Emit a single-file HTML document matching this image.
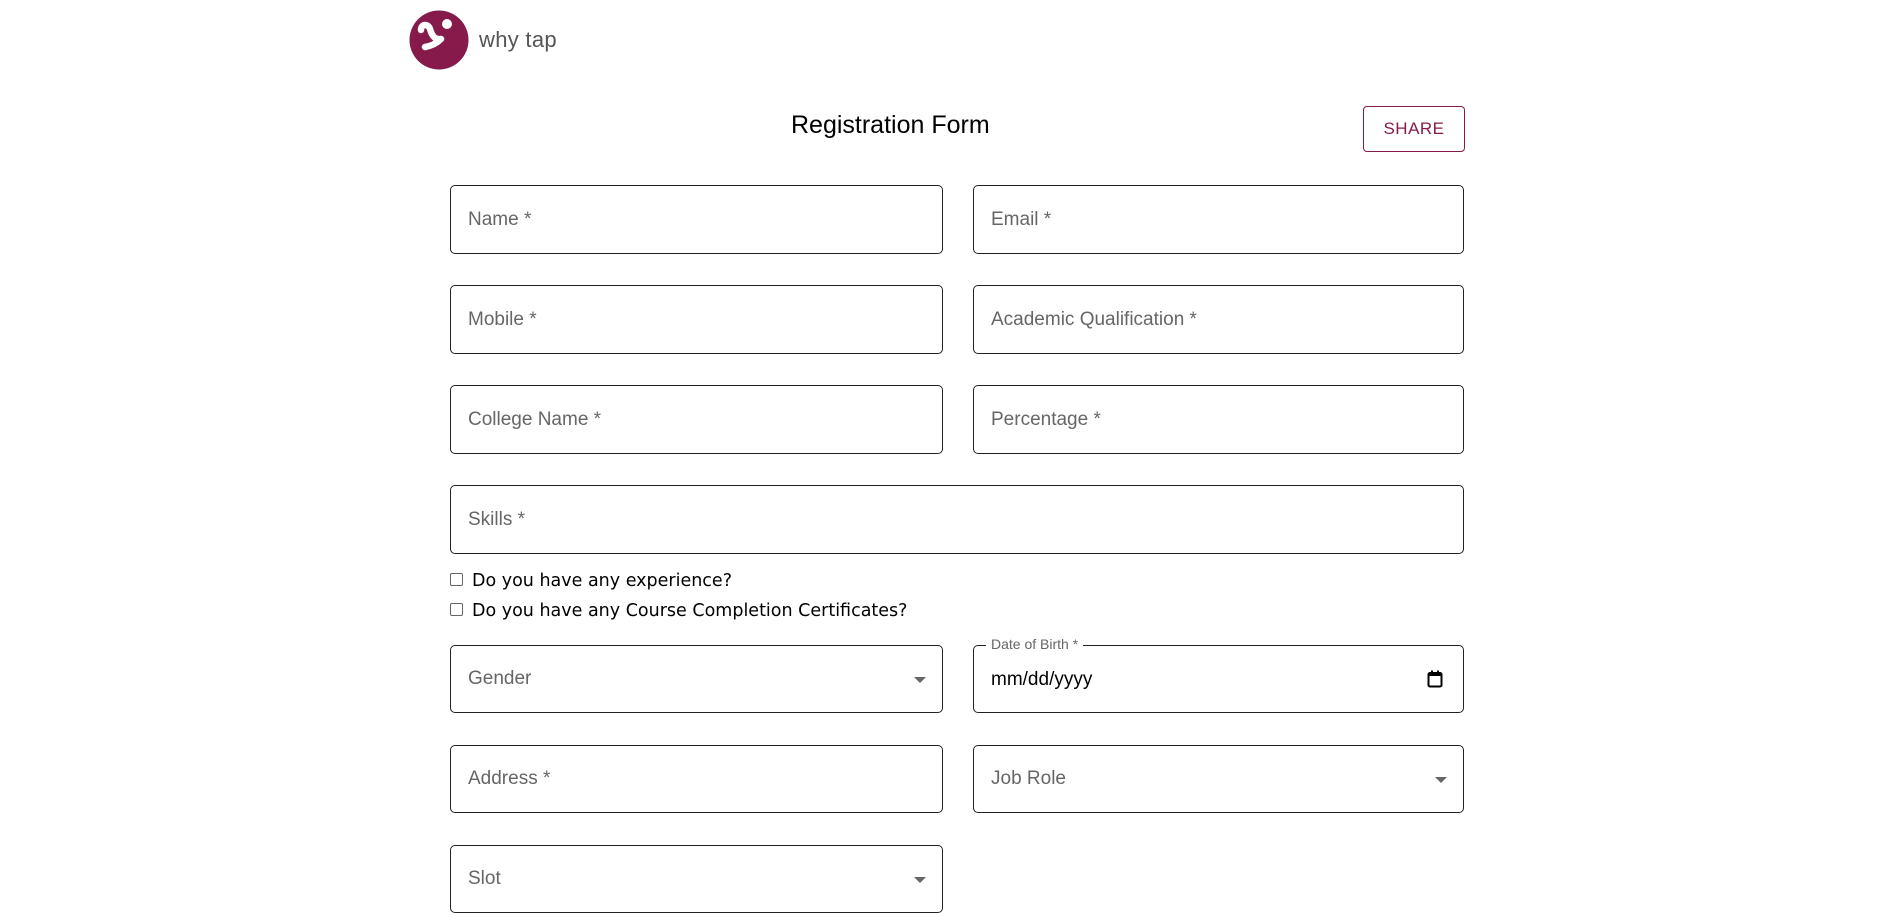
<!DOCTYPE html>
<html><head><meta charset="utf-8"><style>
*{box-sizing:border-box;margin:0;padding:0}
body{width:1888px;height:900px;background:#fff;position:relative;overflow:hidden;font-family:"Liberation Sans",Arial,sans-serif}
.f{position:absolute;border:1px solid #222;border-radius:5px;height:69px}
.f span{position:absolute;left:17px;top:50%;transform:translateY(-50%);font-size:19px;color:#666}
.l{left:450px;width:493px}.r{left:973px;width:491px}
.arr{position:absolute;right:16px;top:31px;width:0;height:0;border-left:6px solid transparent;border-right:6px solid transparent;border-top:6px solid #666}
.cb{position:absolute;left:450px;font-family:"DejaVu Sans","Liberation Sans",sans-serif;font-size:17.5px;color:#000;display:flex;align-items:center}
.cb i{display:inline-block;width:13px;height:13px;border:1px solid #666;border-radius:2px;margin-right:9px}
</style></head><body>
<svg style="position:absolute;left:409px;top:10px" width="60" height="60" viewBox="0 0 60 60">
<circle cx="30" cy="30" r="29.5" fill="#861b4b"/>
<path d="M12 20 C12 14 19 13 21 19 C23 26 26 30 32 29 M32 29 C27 34 22 36 16 37" stroke="#fff" stroke-width="6.5" fill="none" stroke-linecap="round"/>
<circle cx="38" cy="14" r="5" fill="#fff"/>
</svg>
<div style="position:absolute;left:479px;top:27px;font-size:22px;color:#555;letter-spacing:0.3px">why tap</div>
<div style="position:absolute;left:791px;top:111px;font-size:25px;color:#000">Registration Form</div>
<div style="position:absolute;left:1363px;top:106px;width:102px;height:46px;border:1px solid #861b4b;border-radius:4px;color:#861b4b;font-size:17px;display:flex;align-items:center;justify-content:center;letter-spacing:0.5px">SHARE</div>

<div class="f l" style="top:185px"><span>Name *</span></div>
<div class="f r" style="top:185px"><span>Email *</span></div>
<div class="f l" style="top:285px"><span>Mobile *</span></div>
<div class="f r" style="top:285px"><span>Academic Qualification *</span></div>
<div class="f l" style="top:385px"><span>College Name *</span></div>
<div class="f r" style="top:385px"><span>Percentage *</span></div>
<div class="f" style="top:485px;left:450px;width:1014px"><span>Skills *</span></div>

<div class="cb" style="top:571px"><i style="margin-top:-4px"></i>Do you have any experience?</div>
<div class="cb" style="top:601px"><i style="margin-top:-4px"></i>Do you have any Course Completion Certificates?</div>

<div class="f l" style="top:645px;height:68px"><span>Gender</span><div class="arr"></div></div>
<div class="f r" style="top:645px;height:68px">
<div style="position:absolute;left:12px;top:-10px;background:#fff;padding:0 5px;font-size:14px;color:#666">Date of Birth *</div>
<span style="color:#000;margin-top:1px">mm/dd/yyyy</span>
<svg style="position:absolute;right:20px;top:24px" width="16" height="18" viewBox="0 0 16 18"><rect x="1.5" y="3" width="13" height="13.5" rx="1.5" fill="none" stroke="#000" stroke-width="2"/><rect x="1.5" y="3" width="13" height="3" fill="#000"/><rect x="4" y="0.5" width="2" height="3" fill="#000"/><rect x="10" y="0.5" width="2" height="3" fill="#000"/></svg>
</div>
<div class="f l" style="top:745px;height:68px"><span>Address *</span></div>
<div class="f r" style="top:745px;height:68px"><span>Job Role</span><div class="arr"></div></div>
<div class="f l" style="top:845px;height:68px"><span>Slot</span><div class="arr"></div></div>
</body></html>
